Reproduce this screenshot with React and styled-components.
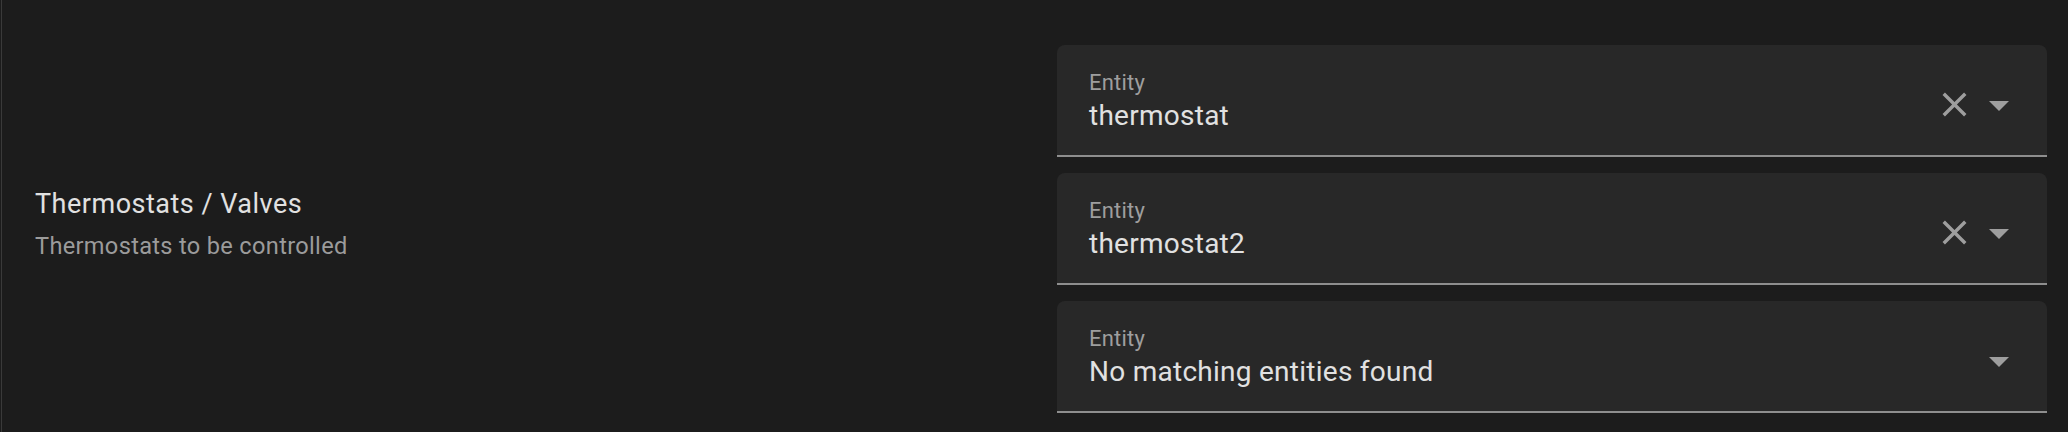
import React from "react";
import styled, { createGlobalStyle } from "styled-components";

const GlobalStyle = createGlobalStyle`
	body {
		margin: 0;
		background: #1c1c1c;
		font-family: Roboto, "Noto Sans", sans-serif;
	}
`;

const entities = [
	{ id: 1, value: "thermostat", clearable: true },
	{ id: 2, value: "thermostat2", clearable: true },
	{ id: 3, value: "No matching entities found", clearable: false },
];

const ClearIcon = () => (
	<svg width="41" height="41" viewBox="0 0 24 24" fill="currentColor">
		<path d="M19,6.41L17.59,5L12,10.59L6.41,5L5,6.41L10.59,12L5,17.59L6.41,19L12,13.41L17.59,19L19,17.59L13.41,12L19,6.41Z" />
	</svg>
);

const MenuDownIcon = () => (
	<svg width="48" height="48" viewBox="0 0 24 24" fill="currentColor">
		<path d="M7,10L12,15L17,10H7Z" />
	</svg>
);

const EntityPicker = ({ value, clearable }) => {
	return (
		<Field>
			<TextCol>
				<Label>Entity</Label>
				<Value>{value}</Value>
			</TextCol>
			<Icons>
				{clearable && <ClearIcon />}
				<MenuDownIcon />
			</Icons>
		</Field>
	);
};

const App = () => {
	const renderPickers = entities.map((entity) => (
		<EntityPicker key={entity.id} value={entity.value} clearable={entity.clearable} />
	));

	return (
		<>
			<GlobalStyle />
			<Page>
				<SettingsRow>
					<Info>
						<Heading>Thermostats / Valves</Heading>
						<Description>Thermostats to be controlled</Description>
					</Info>
					<PickerList>{renderPickers}</PickerList>
				</SettingsRow>
			</Page>
		</>
	);
};

export default App;

const Page = styled.div`
	height: 432px;
	margin-left: 1px;
	border-left: 1px solid #3a3a3a;
	overflow: hidden;
	box-sizing: border-box;
`;

const SettingsRow = styled.div`
	display: flex;
	justify-content: space-between;
	align-items: center;
	padding: 45px 21px 0 33px;
`;

const Info = styled.div`
	margin-bottom: 10px;
`;

const Heading = styled.div`
	color: #e1e1e1;
	font-size: 27px;
	line-height: 36px;
	letter-spacing: 0.5px;
`;

const Description = styled.div`
	margin-top: 8px;
	color: #9b9b9b;
	font-size: 23.6px;
	line-height: 32px;
	letter-spacing: 0.32px;
`;

const PickerList = styled.div`
	width: 990px;
	display: flex;
	flex-direction: column;
	gap: 16px;
`;

const Field = styled.div`
	display: flex;
	align-items: center;
	height: 112px;
	box-sizing: border-box;
	padding: 9px 24px 0 32px;
	background: #282828;
	border-radius: 8px 8px 0 0;
	border-bottom: 2px solid #8e8e8e;
`;

const TextCol = styled.div`
	flex: 1;
	align-self: flex-start;
	margin-top: 17px;
`;

const Label = styled.div`
	color: #9e9e9e;
	font-size: 22px;
	line-height: 24px;
	letter-spacing: 0.2px;
`;

const Value = styled.div`
	margin-top: 4px;
	color: #e1e1e1;
	font-size: 28px;
	line-height: 34px;
	letter-spacing: 0.26px;
`;

const Icons = styled.div`
	display: flex;
	align-items: center;
	color: #9e9e9e;
`;
